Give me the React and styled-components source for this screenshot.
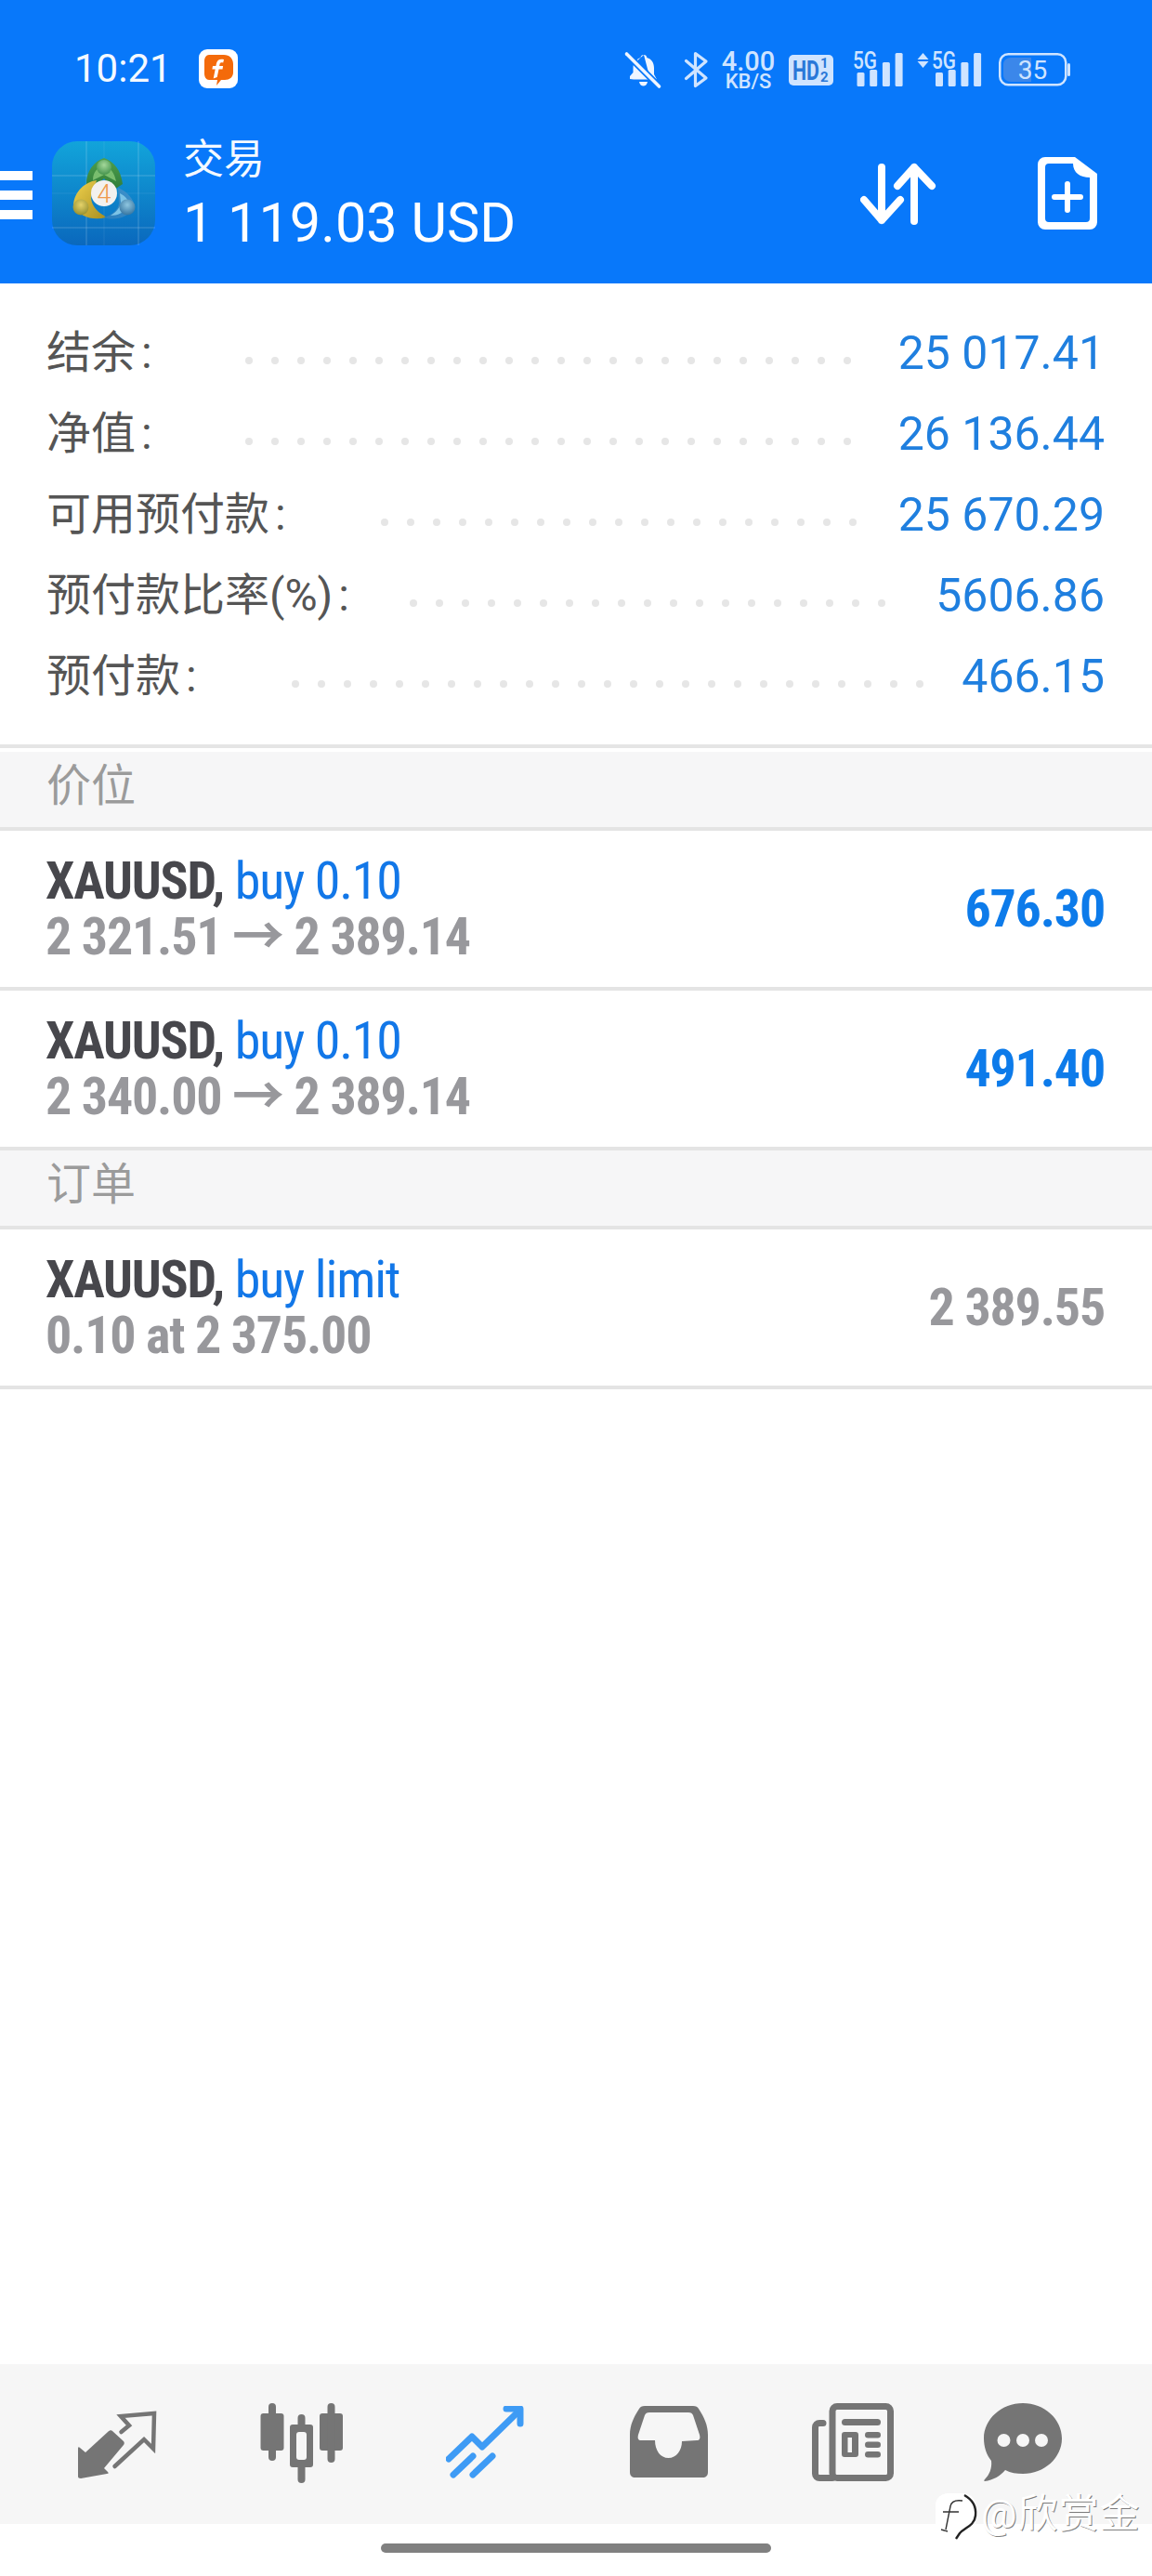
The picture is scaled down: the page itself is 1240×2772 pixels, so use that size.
import React from "react";
import styled, { createGlobalStyle } from "styled-components";

const Global = createGlobalStyle`
  html, body { margin: 0; padding: 0; background: #fff; }
  body { font-family: Roboto, "Noto Sans CJK SC", sans-serif; }
  * { box-sizing: border-box; }
`;

const CJK = `Roboto, "Noto Sans CJK SC", sans-serif`;
const BLUE = "#0878fa";
const TINT = "#cfe4ff";

const Page = styled.div`
  position: relative;
  width: 1240px;
  height: 2772px;
  display: flex;
  flex-direction: column;
  background: #fff;
  overflow: hidden;
`;

const Top = styled.header`
  height: 305px;
  background: ${BLUE};
  display: flex;
  flex-direction: column;
  color: #fff;
`;

const StatusBar = styled.div`
  height: 148px;
  display: flex;
  align-items: center;
  padding: 0 88px 0 80px;
`;

const Time = styled.div`
  font-size: 42px;
  line-height: 1;
  color: #f4f9ff;
`;

const StatusRight = styled.div`
  margin-left: auto;
  display: flex;
  align-items: center;
  padding-top: 2px;
`;

const StatusSvg = styled.svg`
  display: block;
  flex: none;
  overflow: visible;
  margin-left: ${(p) => p.$ml || 0}px;
`;

const Speed = styled.div`
  width: 59px;
  margin-left: 14px;
  display: flex;
  flex-direction: column;
  align-items: center;
  color: ${TINT};
  font-weight: 500;
`;

const SpeedValue = styled.span`
  font-size: 29px;
  line-height: 24px;
`;

const SpeedUnit = styled.span`
  font-size: 22px;
  line-height: 19px;
  white-space: nowrap;
`;

const AppBar = styled.div`
  flex: 1;
  display: flex;
  align-items: flex-start;
`;

const Burger = styled.div`
  width: 35px;
  margin-top: 36px;
  height: 52px;
  display: flex;
  flex-direction: column;
  justify-content: space-between;
`;

const BurgerBar = styled.span`
  height: 10px;
  background: #fff;
`;

const AppLogo = styled.svg`
  display: block;
  flex: none;
  margin: 4px 0 0 21px;
`;

const Titles = styled.div`
  margin-left: 30px;
  display: flex;
  flex-direction: column;
`;

const TitleMain = styled.div`
  font-family: ${CJK};
  font-size: 44px;
  line-height: 52px;
  margin-top: -2px;
  color: #f4f9ff;
`;

const TitleBalance = styled.div`
  font-size: 59.400px;
  line-height: 66px;
  margin-top: 9px;
  font-weight: 400;
  white-space: nowrap;
  color: #fff;
`;

const Actions = styled.div`
  margin-left: auto;
  display: flex;
  align-items: flex-start;
`;

const ActionSvg = styled.svg`
  display: block;
  flex: none;
  margin: ${(p) => p.$mt}px ${(p) => p.$mr}px 0 0;
`;

const Summary = styled.section`
  padding: 31px 51px 30px 50px;
  border-bottom: 4px solid #e5e5e5;
`;

const SummaryRow = styled.div`
  height: 87px;
  display: flex;
  align-items: center;
`;

const SummaryLabel = styled.div`
  font-family: ${CJK};
  font-size: 48px;
  line-height: 87px;
  color: #555;
  white-space: nowrap;
`;

const Colon = styled.span`
  margin-left: 6px;
`;

const Dots = styled.div`
  margin-left: ${(p) => p.$ml}px;
  margin-top: 16px;
  display: flex;
  gap: 20px;
`;

const Dot = styled.i`
  display: block;
  width: 8px;
  height: 8px;
  border-radius: 50%;
  background: #e6e6e6;
`;

const SummaryValue = styled.div`
  margin-left: auto;
  font-size: 50px;
  color: #1f7fdf;
  white-space: nowrap;
`;

const SectionHead = styled.div`
  height: 85px;
  margin-top: ${(p) => p.$mt || 0}px;
  padding: 0 51px 18px 50px;
  display: flex;
  align-items: center;
  background: #f6f6f7;
  border-bottom: 4px solid #e4e4e4;
  font-family: ${CJK};
  font-size: 48px;
  color: #9b9b9b;
`;

const Trade = styled.div`
  height: 172px;
  padding: 0 51px 0 49px;
  display: flex;
  align-items: center;
  justify-content: space-between;
  border-bottom: 4px solid #e4e4e4;
`;

const TradeText = styled.div`
  display: flex;
  flex-direction: column;
  font-stretch: 75%;
  font-size: 56px;
  line-height: 60px;
  letter-spacing: -1.200px;
  white-space: nowrap;
`;

const Symbol = styled.span`
  font-weight: 700;
  color: #47474c;
`;

const Side = styled.span`
  font-weight: 400;
  color: #1277e8;
`;

const Prices = styled.div`
  font-weight: 700;
  color: #98989c;
`;

const Amount = styled.div`
  font-stretch: 75%;
  font-size: 56px;
  letter-spacing: -1.200px;
  font-weight: 700;
  color: ${(p) => (p.$muted ? "#98989c" : "#0d7bea")};
`;

const Nav = styled.nav`
  margin-top: auto;
  height: 172px;
  background: #f6f6f6;
  display: flex;
  align-items: flex-start;
  color: #757575;
`;

const NavSvg = styled.svg`
  display: block;
  flex: none;
  margin-top: ${(p) => p.$mt}px;
  margin-left: ${(p) => p.$ml}px;
`;

const HomeRow = styled.div`
  height: 56px;
  display: flex;
  justify-content: center;
  padding-top: 21px;
`;

const HomeBar = styled.div`
  width: 420px;
  height: 10px;
  border-radius: 5px;
  background: #808080;
`;

const Watermark = styled.div`
  position: absolute;
  left: 1005px;
  top: 2682px;
  display: flex;
  align-items: flex-start;
  gap: 1px;
`;

const WatermarkText = styled.div`
  font-family: ${CJK};
  font-size: 43px;
  line-height: 46px;
  letter-spacing: 1px;
  color: #fff;
  white-space: nowrap;
  text-shadow: 1px 1px 0 rgba(40, 40, 40, 0.6);
`;

const FBadge = () => (
  <StatusSvg width="42" height="42" viewBox="0 0 42 42" $ml={29}>
    <rect width="42" height="42" rx="9" fill="#fff" />
    <path d="M11 6h16c6 0 10 4 10 10v9c0 5-4 8-9 8h-4l-5 6 1-6h-9c-3 0-5-3-5-7V13c0-4 2-7 5-7z" fill="#f46a0a" />
    <path d="M27 11c-4-1-7 0-8 4l-.6 3H15l-.6 3.500h3.300l-2 10 4-1.500 1.800-8.500h4l.6-3.500h-4l.4-2c.3-1.400 1.500-2 3.700-1.500z" fill="#fff" />
  </StatusSvg>
);

const BellOff = () => (
  <StatusSvg width="39" height="38" viewBox="0 0 39 38">
    <path d="M20 3c2 0 3 1 3.300 3 5 1.500 7.700 5.500 7.700 11v7l3 5.500H9l-4-.5v-3l3.500-4V17c0-2 .3-3.600 1-5L27 29.500" fill="#f0f6ff" />
    <path d="M10 12c1.300-3 3.400-5 6.500-6 .3-2 1.500-3 3.500-3z" fill="#f0f6ff" />
    <path d="M15 32h9c-.5 3-2.500 4.500-4.500 4.500S15.500 35 15 32z" fill="#f0f6ff" />
    <path d="M1.500 2l35 35" stroke={BLUE} strokeWidth="7" />
    <path d="M1.500 2l35 35" stroke="#f0f6ff" strokeWidth="3.600" strokeLinecap="round" />
  </StatusSvg>
);

const Bluetooth = () => (
  <StatusSvg width="25" height="38" viewBox="0 0 25 38" $ml={25}>
    <path d="M1.500 9.500L23 28 11.500 36.500v-35L23 10 1.500 28.500" fill="none" stroke={TINT} strokeWidth="3.200" strokeLinejoin="round" strokeLinecap="round" />
  </StatusSvg>
);

const HdBadge = () => (
  <StatusSvg width="48" height="33" viewBox="0 0 48 33" $ml={14}>
    <rect width="48" height="33" rx="5" fill={TINT} />
    <text x="4" y="27" fontFamily="Roboto, sans-serif" fontWeight="700" fontSize="30" textLength="29" lengthAdjust="spacingAndGlyphs" fill="#2a78d8">HD</text>
    <text x="34" y="14" fontFamily="Roboto, sans-serif" fontWeight="700" fontSize="15" fill="#2a78d8">1</text>
    <text x="34" y="29" fontFamily="Roboto, sans-serif" fontWeight="700" fontSize="15" fill="#2a78d8">2</text>
  </StatusSvg>
);

const Signal = ({ arrows, ml, width }) => {
  const o = arrows ? 20 : 4.500;
  const step = 13.700;
  const tops = [22, 19, 11, 1];
  return (
    <StatusSvg width={width} height="38" viewBox={`0 0 ${width} 38`} $ml={ml}>
      {arrows && <path d="M6.500 1l6 7H.5zM6.500 17l6-7H.5z" fill={TINT} />}
      <text x={arrows ? 16 : 0} y="18" fontFamily="Roboto, sans-serif" fontWeight="500" fontSize="26" textLength="26" lengthAdjust="spacingAndGlyphs" fill={TINT}>5G</text>
      {tops.map((t, i) => (
        <rect key={i} x={o + i * step} y={t} width="8" height={37 - t} rx="1.500" fill={TINT} />
      ))}
    </StatusSvg>
  );
};

const Battery = () => (
  <StatusSvg width="77" height="36" viewBox="0 0 77 36" $ml={18}>
    <rect x="1.250" y="1.250" width="71" height="33" rx="9" fill="none" stroke={TINT} strokeWidth="2.500" />
    <path d="M13 5h22v26H13c-4 0-8-3-8-7V12c0-4 4-7 8-7z" fill="#3b87ea" />
    <rect x="74" y="11" width="3" height="14" rx="1.500" fill={TINT} />
    <text x="36.500" y="28" textAnchor="middle" fontFamily="Roboto, sans-serif" fontSize="28" fill={TINT}>35</text>
  </StatusSvg>
);

const Mt4Logo = () => (
  <AppLogo width="111" height="112" viewBox="0 0 111 112">
    <defs>
      <linearGradient id="mtBg" x1="0" y1="0" x2="0" y2="1">
        <stop offset="0" stopColor="#12a4da" />
        <stop offset="1" stopColor="#0a68bd" />
      </linearGradient>
      <linearGradient id="mtG" x1="0" y1="0" x2="0" y2="1">
        <stop offset="0" stopColor="#4f9f4c" />
        <stop offset="1" stopColor="#2f7d3a" />
      </linearGradient>
      <linearGradient id="mtY" x1="0" y1="0" x2="1" y2="1">
        <stop offset="0" stopColor="#f0d24e" />
        <stop offset="1" stopColor="#a98f20" />
      </linearGradient>
      <linearGradient id="mtB" x1="1" y1="0" x2="0" y2="1">
        <stop offset="0" stopColor="#3f93cc" />
        <stop offset="1" stopColor="#2a7dbc" />
      </linearGradient>
      <radialGradient id="mtHG" cx=".5" cy=".35" r=".7">
        <stop offset="0" stopColor="#a4d89a" />
        <stop offset="1" stopColor="#3f8f48" />
      </radialGradient>
      <radialGradient id="mtHY" cx=".5" cy=".35" r=".7">
        <stop offset="0" stopColor="#e6d36a" />
        <stop offset="1" stopColor="#8f8a2c" />
      </radialGradient>
      <radialGradient id="mtHB" cx=".5" cy=".35" r=".7">
        <stop offset="0" stopColor="#8fc6e0" />
        <stop offset="1" stopColor="#2f6f9c" />
      </radialGradient>
    </defs>
    <rect width="111" height="112" rx="27" fill="url(#mtBg)" />
    <path d="M37 0v112M93 0v112M0 37h111M0 93h111" stroke="#fff" strokeOpacity=".22" strokeWidth="1" />
    <path d="M56 0v112M0 56h111" stroke="#fff" strokeOpacity=".08" strokeWidth="1" />
    <path d="M37 46c0-14 8-24 19-28 11 4 18 13 20 28l-9 6-11-12-11 10z" fill="url(#mtG)" />
    <path d="M44 42c0-9 5-14 12-16 7 2 11 8 13 17l-13-7z" fill="#79bd6e" />
    <path d="M48 42c-13 2-24 12-25 27 6 12 21 17 35 13l-2-2c-8-4-14-12-14-20z" fill="url(#mtY)" />
    <path d="M71 50c10 4 17 12 18 21-7 11-21 15-33 11 9-3 15-8 16-15z" fill="url(#mtB)" />
    <path d="M73 56c6 3 10 8 11 13-6 8-14 11-21 11 6-4 10-8 11-14z" fill="#7cc3e6" />
    <circle cx="56" cy="28" r="8" fill="url(#mtHG)" />
    <circle cx="31" cy="71" r="8.500" fill="url(#mtHY)" />
    <circle cx="81" cy="71" r="8.500" fill="url(#mtHB)" />
    <circle cx="56" cy="56" r="14" fill="#f3f1ee" />
    <text x="56" y="66" textAnchor="middle" fontFamily="Roboto, sans-serif" fontWeight="300" fontSize="27" fill="#ee9a4d">4</text>
  </AppLogo>
);

const SwapIcon = () => (
  <ActionSvg width="82" height="68" viewBox="0 0 82 68" $mt={26} $mr={109}>
    <g fill="none" stroke="#fff" strokeWidth="8" strokeLinecap="round" strokeLinejoin="round">
      <path d="M23 6v57M4 41l19 22 20-22" />
      <path d="M58 64V6M40 26L58 6l19 20" />
    </g>
  </ActionSvg>
);

const NewDocIcon = () => (
  <ActionSvg width="64" height="78" viewBox="0 0 64 78" $mt={21} $mr={59}>
    <path fillRule="evenodd" fill="#fff" d="M8 0h32l24 18v52a8 8 0 0 1-8 8H8a8 8 0 0 1-8-8V8a8 8 0 0 1 8-8zm4 7a4 4 0 0 0-4 4v55a4 4 0 0 0 4 4h40a4 4 0 0 0 4-4V22c-10 0-18-5-18-15z" />
    <path d="M18 43h28M32 29v28" stroke="#fff" strokeWidth="6" strokeLinecap="round" />
  </ActionSvg>
);

const ExchangeIcon = () => (
  <NavSvg width="85" height="73" viewBox="0 0 85 73" $mt={50} $ml={84}>
    <path d="M0 71V41c0-2 1-2 2-1l6 5 24-22c2-2 4-2 5-1l12 11c1 1 1 3 0 4L28 62l4 4c1 1 1 2-1 2L3 73c-2 0-3-1-3-2z" fill="currentColor" />
    <path d="M46.500 23L55 16 46 6l36-3-1 38-10-10-31.500 29" fill="none" stroke="currentColor" strokeWidth="4.500" strokeLinecap="round" />
  </NavSvg>
);

const CandleIcon = () => (
  <NavSvg width="89" height="86" viewBox="0 0 89 86" $mt={42} $ml={111}>
    <g fill="currentColor">
      <rect x="0.500" y="11" width="25" height="40" rx="3" />
      <rect x="9" y="0" width="8" height="62" rx="4" />
      <rect x="64" y="11" width="25" height="40" rx="3" />
      <rect x="72.500" y="0" width="8" height="64" rx="4" />
      <rect x="40.500" y="12" width="8" height="74" rx="4" />
      <rect x="32" y="23" width="25" height="46" rx="3" />
    </g>
    <rect x="39" y="31" width="11" height="30" rx="3" fill="#f6f6f6" />
  </NavSvg>
);

const TradeIcon = () => (
  <NavSvg width="84" height="78" viewBox="0 0 84 78" $mt={45} $ml={111}>
    <g fill="none" stroke="#3e9bf5" strokeWidth="7" strokeLinecap="round" strokeLinejoin="round">
      <path d="M3 57l25-24 11 11L78 6" />
      <path d="M65 3h15v16" />
    </g>
    <path d="M8 74l21-20M29 74l21-20" fill="none" stroke="#3e9bf5" strokeWidth="7" strokeLinecap="round" />
  </NavSvg>
);

const InboxIcon = () => (
  <NavSvg width="84" height="78" viewBox="0 0 84 78" $mt={45} $ml={114}>
    <path fillRule="evenodd" fill="currentColor" d="M16 0h52c3 0 5 1 6 3 6 9 10 18 10 28v40c0 4-2 6-6 6H6c-4 0-6-2-6-6V31C0 21 4 12 10 3c1-2 3-3 6-3zm5 7c-3 0-4 1-5 3L9 31c-1 4 0 6 3 6h15c0 11 6 19 14.500 19S56 48 56 38l16-1c3 0 4-2 3-6L68 10c-1-2-2-3-5-3z" />
  </NavSvg>
);

const NewsIcon = () => (
  <NavSvg width="88" height="84" viewBox="0 0 88 84" $mt={42} $ml={112}>
    <g fill="none" stroke="currentColor" strokeWidth="7">
      <rect x="22" y="3.500" width="62.500" height="77" rx="5" />
      <path d="M12 21.500H8a4.500 4.500 0 0 0-4.500 4.500v50a4.500 4.500 0 0 0 4.500 4.500h14" strokeLinecap="round" />
    </g>
    <g fill="currentColor">
      <rect x="32" y="17" width="42" height="7" rx="3.500" />
      <path fillRule="evenodd" d="M35 31h12a3 3 0 0 1 3 3v21a3 3 0 0 1-3 3H35a3 3 0 0 1-3-3V34a3 3 0 0 1 3-3zm3.500 6v16h4.500V37z" />
      <rect x="57" y="31" width="17" height="6.500" rx="3.250" />
      <rect x="57" y="41.500" width="17" height="6.500" rx="3.250" />
      <rect x="57" y="52" width="17" height="6.500" rx="3.250" />
    </g>
  </NavSvg>
);

const ChatIcon = () => (
  <NavSvg width="84" height="84" viewBox="0 0 84 84" $mt={42} $ml={97}>
    <path d="M42 0c23 0 42 17 42 38S65 76 42 76c-7 0-13-1-19-4-5 6-13 11-22 12-1 0-1-1 0-2 5-5 8-12 7-20C3 56 0 47 0 38 0 17 19 0 42 0z" fill="currentColor" />
    <circle cx="21.500" cy="40" r="7" fill="#f6f6f6" />
    <circle cx="42" cy="40" r="7" fill="#f6f6f6" />
    <circle cx="62" cy="40" r="7" fill="#f6f6f6" />
  </NavSvg>
);

const WatermarkLogo = () => (
  <svg width="50" height="54" viewBox="0 0 50 54" style={{ display: "block", flex: "none" }}>
    <rect x="2" y="1" width="43" height="44" rx="13" fill="#fff" />
    <path d="M31 9c-7-1-12 0-13 6l-5 25M10 21h17M8 40l7 2" fill="none" stroke="#333" strokeWidth="1.400" />
    <path d="M33 3c9 5 13 13 12 22-1 11-12 13-17 19l-4 6" fill="none" stroke="#222" strokeWidth="2.400" />
  </svg>
);

const summary = [
  { label: "结余", value: "25 017.41", dots: 24, ml: 100 },
  { label: "净值", value: "26 136.44", dots: 24, ml: 100 },
  { label: "可用预付款", value: "25 670.29", dots: 19, ml: 102 },
  { label: "预付款比率(%)", value: "5606.86", dots: 19, ml: 65 },
  { label: "预付款", value: "466.15", dots: 25, ml: 102 },
];

const TradeRow = ({ symbol, side, prices, amount, muted }) => (
  <Trade>
    <TradeText>
      <div>
        <Symbol>{symbol}, </Symbol>
        <Side>{side}</Side>
      </div>
      <Prices>{prices}</Prices>
    </TradeText>
    <Amount $muted={muted}>{amount}</Amount>
  </Trade>
);

export default function App() {
  return (
    <Page>
      <Global />
      <Top>
        <StatusBar>
          <Time>10:21</Time>
          <FBadge />
          <StatusRight>
            <BellOff />
            <Bluetooth />
            <Speed>
              <SpeedValue>4.00</SpeedValue>
              <SpeedUnit>KB/S</SpeedUnit>
            </Speed>
            <HdBadge />
            <Signal ml={21} width={54} />
            <Signal arrows ml={15} width={70} />
            <Battery />
          </StatusRight>
        </StatusBar>
        <AppBar>
          <Burger>
            <BurgerBar />
            <BurgerBar />
            <BurgerBar />
          </Burger>
          <Mt4Logo />
          <Titles>
            <TitleMain>交易</TitleMain>
            <TitleBalance>1 119.03 USD</TitleBalance>
          </Titles>
          <Actions>
            <SwapIcon />
            <NewDocIcon />
          </Actions>
        </AppBar>
      </Top>
      <Summary>
        {summary.map((r) => (
          <SummaryRow key={r.label}>
            <SummaryLabel>
              {r.label}
              <Colon>:</Colon>
            </SummaryLabel>
            <Dots $ml={r.ml}>
              {Array.from({ length: r.dots }, (_, i) => (
                <Dot key={i} />
              ))}
            </Dots>
            <SummaryValue>{r.value}</SummaryValue>
          </SummaryRow>
        ))}
      </Summary>
      <SectionHead $mt={4}>价位</SectionHead>
      <TradeRow symbol="XAUUSD" side="buy 0.10" prices="2 321.51 → 2 389.14" amount="676.30" />
      <TradeRow symbol="XAUUSD" side="buy 0.10" prices="2 340.00 → 2 389.14" amount="491.40" />
      <SectionHead>订单</SectionHead>
      <TradeRow symbol="XAUUSD" side="buy limit" prices="0.10 at 2 375.00" amount="2 389.55" muted />
      <Nav>
        <ExchangeIcon />
        <CandleIcon />
        <TradeIcon />
        <InboxIcon />
        <NewsIcon />
        <ChatIcon />
      </Nav>
      <HomeRow>
        <HomeBar />
      </HomeRow>
      <Watermark>
        <WatermarkLogo />
        <WatermarkText>@欣赏金</WatermarkText>
      </Watermark>
    </Page>
  );
}
